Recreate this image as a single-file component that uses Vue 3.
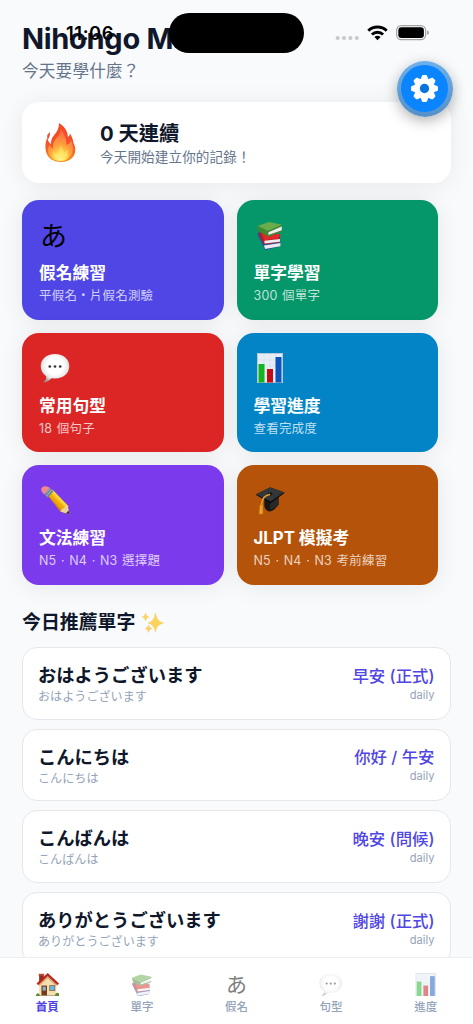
<script setup>
import { h } from 'vue'

const svg = (cls, box, inner) => h('svg', { class: cls, viewBox: box, innerHTML: inner, 'aria-hidden': 'true' })

const art = {
  books: `<g transform="translate(1 1) scale(.92)"><path d="M1.500 14l4-3 4 12 17-1-1 6-15.500 3.500z" fill="#2947a5"/><path d="M8.500 26.500L26.500 24v3.500L10 30.500z" fill="#e9e9ee"/><path d="M3 13l4-2 19 4v8L9 25.500 5.500 20z" fill="#b51f22"/><path d="M6 12l20 2-1.500 5L9 21z" fill="#df2a2b"/><path d="M9 21.500L26 19.500v3L9.500 24.500z" fill="#f0edf0"/><path d="M1.500 5.500L14 1 28.500 4 13 11z" fill="#69ac4c"/><path d="M12.500 11.800L28 5.500V10.300L13.500 15.500z" fill="#eeeef0"/><path d="M1.500 5.500L13 11l15.500-7v1.800L13.500 12.300v3L28.500 10v1.300L13.500 17 3 11.500z" fill="#43882f"/></g>`,
  chat: `<defs><radialGradient id="bub" cx=".5" cy=".42" r=".58"><stop offset=".5" stop-color="#fff"/><stop offset=".78" stop-color="#e8e8e8"/><stop offset="1" stop-color="#9c9c9c"/></radialGradient></defs><path d="M15 1C6.500 1 .7 6 .7 13c0 4.600 2 8 5.600 10.200.2 2.600-1 4.400-3.200 6.300 3.800-.3 6.400-2 8.400-4.300l3.500.2c8.500 0 14.300-5 14.300-12.200S23.500 1 15 1z" fill="url(#bub)"/><g fill="#333"><circle cx="9.800" cy="13.500" r="1.350"/><circle cx="15" cy="13.500" r="1.350"/><circle cx="20.200" cy="13.500" r="1.350"/></g>`,
  chart: `<path d="M2 0h26v30H2z" fill="#b7c9d8"/><path d="M3 1h24v28H3z" fill="#e5edf5"/><path d="M3 7h24M3 13h24M3 19h24M3 25h24M9 1v28M15 1v28M21 1v28" stroke="#d5e0ea" stroke-width=".6"/><path d="M3.500 11h6v18.500h-6z" fill="#13b51f"/><path d="M12 16h6v13.500h-6z" fill="#c10d13"/><path d="M20.500 4h6v25.500h-6z" fill="#0b55bd"/>`,
  pencil: `<g transform="translate(.2 .8) scale(.98)"><path d="M6.200 7.700L10.800 3.200 28 20.300 29.700 29 20.800 26.300z" fill="#f9bd13"/><path d="M8 9.500l2-2 17 17-1.500 3-4.700-1.200z" fill="#eea80d"/><path d="M6.200 7.700l1.800 1.600L22 25l-1.200 1.300z" fill="#cf830a"/><path d="M9.800 5l3-1L29 21l-1.500 2z" fill="#ffd637"/><path d="M20.800 26.300l1.500-3 2.500-.5.800-2.200L28 20.300 29.700 29z" fill="#eed39a"/><path d="M29.700 29l-3.500-1.100 2.700-2.700z" fill="#363636"/><path d="M4 8.500L9.800 2l3.800 3.500-6.200 7z" fill="#6c8794"/><path d="M5 8l5-5M6.500 10.300l5.300-6" stroke="#b7cbd1" stroke-width=".8"/><path d="M.9 3.800Q1.200.6 5.200.4 7.800.2 9.800 2L4 8.500Q1 6.300.9 3.800z" fill="#f0898b"/></g>`,
  cap: `<g transform="translate(.6 1.200) scale(.97)"><path d="M9 14l14-4v10c-3 4-6 6-9 6-3-1-5-3-5-6z" fill="#171717"/><path d="M15 25V15l9-5v9z" fill="#292929"/><path d="M.5 8.300L15 1l14.500 5.200L15.500 17z" fill="#262829"/><path d="M1 8.300L15 1.700 28.500 6.200 15.500 15.500z" fill="#343738"/><path d="M.5 8.300L15.500 16l14-9.800v1L15.500 17.500.5 9.200z" fill="#090909"/><ellipse cx="15" cy="8" rx="2.500" ry="1.500" fill="#111"/><path d="M15 8.300C9 10 7 12 6 19" fill="none" stroke="#dfa02c" stroke-width="1.700"/><path d="M4.500 18.500h3l.3 10q-2.500 1.500-4.500 0z" fill="#d98916"/><path d="M5 20v8M6.500 20v8" stroke="#f2bd4c" stroke-width=".6"/></g>`,
  house: `<path d="M4 2h6v10H4z" fill="#8f2e20"/><path d="M3.500 1h7v2.500h-7z" fill="#b84430"/><path d="M4 13L15 2.500 26 13v15.500H4z" fill="#f5dfb0"/><path d="M4 14L15 4l11 10v3L15 7 4 17z" fill="#d8b57b"/><path d="M.8 13.500L15 0l14.200 13.500-2 2L15 4 2.800 15.500z" fill="#c72b22"/><path d="M1 14l14-12.500L29 14" fill="none" stroke="#891c1a" stroke-width=".7"/><path d="M7 16h7v13H7z" fill="#713a1d"/><path d="M8.500 17.500h4v5h-4z" fill="#8bb9c9"/><path d="M17 15.500h7.500V23H17z" fill="#8f613a"/><path d="M18 16.500h5.500V22H18z" fill="#64b9e7"/><path d="M0 28q2-4 5 0v2H0zM24 28q3-5 6-1v3h-6z" fill="#5b8a27"/><path d="M4 28.500h22V30H4z" fill="#a08665"/>`,
  fire: `<defs><linearGradient id="fo" x2="0" y2="1"><stop stop-color="#f24a23"/><stop offset=".5" stop-color="#f5502a"/><stop offset="1" stop-color="#f98c1f"/></linearGradient><radialGradient id="fi" cx=".5" cy=".95" r=".85"><stop stop-color="#fff690"/><stop offset=".25" stop-color="#ffd94a"/><stop offset=".55" stop-color="#ffa03c"/><stop offset="1" stop-color="#ff6c48"/></radialGradient></defs><path d="M14 0c6 4 8.500 8 9 14 1.500-1 2-2 1.500-4 3 4 3.500 7 4 10 2.500 5 2.500 10-.5 14-3 3.500-7 5-12 5C8 39 2.500 35 .8 28-.3 22 1 18 2.500 14c.5 4 1.500 6 3.500 7 0-5 1.500-7 4-10 2.500-3 4-6 4-11z" fill="url(#fo)"/><path d="M15.500 6c4.500 5 6 11 6 16 2.500-.5 4-2.500 4.500-5 2.500 6 2.500 12-.5 16-2 3-5 5-9.500 5-8 0-12.500-4-13-10 0-3 .5-5 1.500-6 1 2 2 3 3.500 3.500-.5-5 1-8 3.500-10.500 3-3 4-5 4-9z" fill="url(#fi)"/><path d="M15.500 22c1.500 3 2 5 4 7.500 2-1 3-2 3-4 2 6-1 12-6.500 12S7 35 8.500 28c1 2 2 3 3 3 2-2 4-5 4-9z" fill="#fff07a" opacity=".5"/><path d="M5 9q.5 3-1.500 7Q0 13 5 9z" fill="#f04c37"/>`,
  sparkle: `<path d="M13.500 1Q14.500 9.500 21.500 11 14.500 12.500 13.500 20 12.300 12.500 6 11 12.300 9.500 13.500 1zM3.500 1Q4 4.500 7 5 4 5.600 3.500 9 3 5.600.2 5 3 4.500 3.500 1zM6.500 13Q7 16 9.800 16.600 7 17.200 6.500 20.500 6 17.200 3.300 16.600 6 16 6.500 13z" fill="#fbd35e" stroke="#f8c54c" stroke-width=".4"/>`,
}

const Art = (p) => svg('art', p.box || '0 0 30 30', art[p.name])
Art.props = ['name', 'box']

const cards = [
  { tone: 'indigo', icon: 'kana', title: '假名練習', sub: '平假名・片假名測驗' },
  { tone: 'green', icon: 'books', title: '單字學習', sub: '300 個單字' },
  { tone: 'red', icon: 'chat', title: '常用句型', sub: '18 個句子' },
  { tone: 'blue', icon: 'chart', title: '學習進度', sub: '查看完成度' },
  { tone: 'violet', icon: 'pencil', title: '文法練習', sub: 'N5 · N4 · N3 選擇題' },
  { tone: 'orange', icon: 'cap', title: 'JLPT 模擬考', sub: 'N5 · N4 · N3 考前練習' },
]
const words = [
  { jp: 'おはようございます', zh: '早安 (正式)' },
  { jp: 'こんにちは', zh: '你好 / 午安' },
  { jp: 'こんばんは', zh: '晚安 (問候)' },
  { jp: 'ありがとうございます', zh: '謝謝 (正式)' },
]
const tabs = [
  { icon: 'house', label: '首頁', active: true },
  { icon: 'books', label: '單字' },
  { icon: 'kana', label: '假名' },
  { icon: 'chat', label: '句型' },
  { icon: 'chart', label: '進度' },
]
</script>

<template>
  <div class="screen">
    <main class="scroll">
      <header>
        <h1>Nihongo Master</h1>
        <p>今天要學什麼？</p>
      </header>

      <section class="streak">
        <div class="fire"><Art name="fire" box="0 0 31 39" /></div>
        <div>
          <div class="streak-title">0 天連續</div>
          <div class="streak-sub">今天開始建立你的記錄！</div>
        </div>
      </section>

      <section class="grid">
        <article v-for="c in cards" :key="c.title" class="card" :class="c.tone">
          <div class="card-icon">
            <span v-if="c.icon === 'kana'" class="kana">あ</span>
            <Art v-else :name="c.icon" />
          </div>
          <div class="card-title">{{ c.title }}</div>
          <div class="card-sub">{{ c.sub }}</div>
        </article>
      </section>

      <h2><span>今日推薦單字</span><i class="spark"><Art name="sparkle" box="0 0 22 21" /></i></h2>

      <section class="list">
        <article v-for="w in words" :key="w.jp" class="word">
          <div>
            <div class="jp" lang="ja">{{ w.jp }}</div>
            <div class="reading" lang="ja">{{ w.jp }}</div>
          </div>
          <div class="right">
            <div class="zh">{{ w.zh }}</div>
            <div class="tag">daily</div>
          </div>
        </article>
      </section>
    </main>

    <nav>
      <div v-for="t in tabs" :key="t.label" class="tab" :class="{ active: t.active }">
        <div class="tab-icon">
          <span v-if="t.icon === 'kana'" class="kana">あ</span>
          <Art v-else :name="t.icon" />
        </div>
        <div class="tab-label">{{ t.label }}</div>
      </div>
    </nav>

    <div class="time">11:06</div>
    <div class="island"></div>
    <svg class="status" viewBox="0 0 96 18">
      <g fill="#c9cacc">
        <circle cx="3.700" cy="14" r="2.100" /><circle cx="10" cy="14" r="2.100" />
        <circle cx="16.400" cy="14" r="2.100" /><circle cx="22.800" cy="14" r="2.100" />
      </g>
      <g fill="none" stroke="#000" stroke-width="2.900">
        <path d="M34.300 6.700a13.300 13.300 0 0 1 18.400 0" />
        <path d="M37.900 10.500a8.200 8.200 0 0 1 11.200 0" />
      </g>
      <path d="M43.500 16.200l-3.100-3.100a4.600 4.600 0 0 1 6.200 0z" />
      <rect x="62.600" y="1.600" width="29" height="14" rx="4.600" fill="none" stroke="#a2a3a5" stroke-width="1.200" />
      <rect x="64.300" y="3.300" width="25.600" height="10.600" rx="3.200" />
      <path d="M93 6.300q2 .7 2 2.300t-2 2.300z" fill="#a2a3a5" />
    </svg>
    <div class="gear">
      <div class="gear-face">
        <svg viewBox="-15 -15 30 30">
          <circle r="10.600" fill="#fff" />
          <g fill="#fff">
            <path v-for="n in 8" :key="n" :transform="`rotate(${n * 45})`" d="M-4.200-9L-2.700-13Q-2.400-13.900-1.500-13.900H1.500Q2.400-13.900 2.700-13L4.200-9z" />
          </g>
          <circle r="4.800" fill="#0874dd" />
        </svg>
      </div>
    </div>
  </div>
</template>

<style>
body {
  background: #f9fafc;
}
</style>

<style scoped>
.screen {
  position: relative;
  display: flex;
  flex-direction: column;
  width: 473px;
  height: 1024px;
  overflow: hidden;
  background: #f9fafc;
  color: #0f172a;
  font-family: Inter, "Noto Sans CJK TC", sans-serif;
  white-space: nowrap;
}
.scroll {
  flex: 1;
  min-height: 0;
  overflow: hidden;
  padding: 21px 22px 0;
}
:deep(.art) {
  display: block;
  width: 100%;
  height: 100%;
}
h1 {
  margin: 0;
  font-size: 29px;
  line-height: 36px;
  font-weight: 700;
  letter-spacing: -0.300px;
}
header p {
  margin: 4px 0 0;
  font-size: 16.600px;
  line-height: 20px;
  letter-spacing: 0.200px;
  color: #64748b;
}
.streak {
  display: flex;
  align-items: center;
  height: 80.500px;
  margin-top: 21.300px;
  border-radius: 17px;
  background: #fff;
  box-shadow: 0 2px 24px rgba(0, 0, 0, 0.07);
}
.fire {
  width: 31px;
  height: 39px;
  margin: 0 24px 0 23px;
}
.streak-title {
  margin-top: 3px;
  font-size: 20.300px;
  line-height: 26px;
  font-weight: 700;
}
.streak-sub {
  font-size: 13.600px;
  line-height: 20px;
  letter-spacing: 0.100px;
  color: #64748b;
}
.grid {
  display: grid;
  grid-template-columns: 201.500px 201.500px;
  grid-auto-rows: 119.600px;
  gap: 13px;
  margin-top: 17.500px;
}
.card {
  box-sizing: border-box;
  padding: 20px 17px 0;
  border-radius: 17px;
  color: #fff;
  box-shadow: 0 2px 24px rgba(0, 0, 0, 0.08);
}
.indigo { background: #4f46e5; }
.green { background: #059669; }
.red { background: #dc2626; }
.blue { background: #0284c7; }
.violet { background: #7c3aed; }
.orange { background: #b45309; }
.card-icon {
  width: 30px;
  height: 30px;
  margin-left: 1px;
}
.kana {
  display: block;
  font-family: "Noto Sans CJK JP", sans-serif;
  font-size: 27px;
  line-height: 29px;
  color: #000;
}
.card-title {
  margin-top: 11px;
  font-size: 16.800px;
  line-height: 24px;
  font-weight: 700;
}
.card-sub {
  margin-top: 0.700px;
  font-size: 12.500px;
  line-height: 20px;
  letter-spacing: 0.200px;
  word-spacing: 0.800px;
  color: rgba(255, 255, 255, 0.75);
}
h2 {
  display: flex;
  align-items: center;
  height: 25px;
  margin: 25px 0 12px;
  font-size: 18.900px;
  line-height: 25px;
  font-weight: 700;
}
.spark {
  width: 22px;
  height: 21px;
  margin-left: 7px;
}
.list {
  display: grid;
  grid-auto-rows: 72.700px;
  gap: 9px;
}
.word {
  box-sizing: border-box;
  display: flex;
  justify-content: space-between;
  padding: 13px 15.500px 0 15px;
  border: 1px solid #e5e7eb;
  border-radius: 15px;
  background: #fff;
}
.jp {
  font-family: "Noto Sans CJK JP", sans-serif;
  font-size: 18.300px;
  line-height: 26px;
  font-weight: 700;
}
.reading {
  font-family: "Noto Sans CJK JP", sans-serif;
  font-size: 12.100px;
  line-height: 18px;
  color: #94a3b8;
}
.right {
  text-align: right;
}
.zh {
  margin-top: 1.500px;
  font-size: 16.400px;
  line-height: 26px;
  font-weight: 500;
  color: #4f46e5;
}
.tag {
  margin-top: -2px;
  font-size: 11.100px;
  line-height: 16px;
  color: #94a3b8;
}
nav {
  box-sizing: border-box;
  display: grid;
  grid-template-columns: repeat(5, 1fr);
  height: 67px;
  padding-top: 14.500px;
  border-top: 1px solid #eceef1;
  background: #fff;
}
.tab {
  display: flex;
  flex-direction: column;
  align-items: center;
}
.tab-icon {
  width: 23.500px;
  height: 23.500px;
  opacity: 0.5;
}
.tab-icon .kana {
  font-size: 21px;
  line-height: 21px;
  text-align: center;
}
.tab-label {
  margin-top: 3px;
  font-size: 11.500px;
  line-height: 16px;
  font-weight: 500;
  color: #94a3b8;
}
.active .tab-icon {
  opacity: 1;
}
.active .tab-label {
  font-weight: 700;
  color: #4f46e5;
}
.time {
  position: absolute;
  left: 66px;
  top: 22px;
  font-size: 18.300px;
  line-height: 22px;
  font-weight: 600;
  letter-spacing: 0.600px;
  color: #000;
}
.island {
  position: absolute;
  left: 169px;
  top: 13px;
  width: 135px;
  height: 39.500px;
  border-radius: 20px;
  background: #000;
}
.status {
  position: absolute;
  left: 334px;
  top: 24px;
  width: 96px;
  height: 18px;
}
.gear {
  position: absolute;
  left: 396.500px;
  top: 60.500px;
  box-sizing: border-box;
  width: 56px;
  height: 56px;
  padding: 4.300px;
  border-radius: 50%;
  background: linear-gradient(#6fb0ea, #5590c8);
  box-shadow: 0 4px 14px rgba(0, 0, 0, 0.3);
}
.gear-face {
  box-sizing: border-box;
  height: 100%;
  padding: 9.200px;
  border-radius: 50%;
  background: #0a84ff;
}
.gear svg {
  display: block;
  width: 29px;
  height: 29px;
}
</style>
